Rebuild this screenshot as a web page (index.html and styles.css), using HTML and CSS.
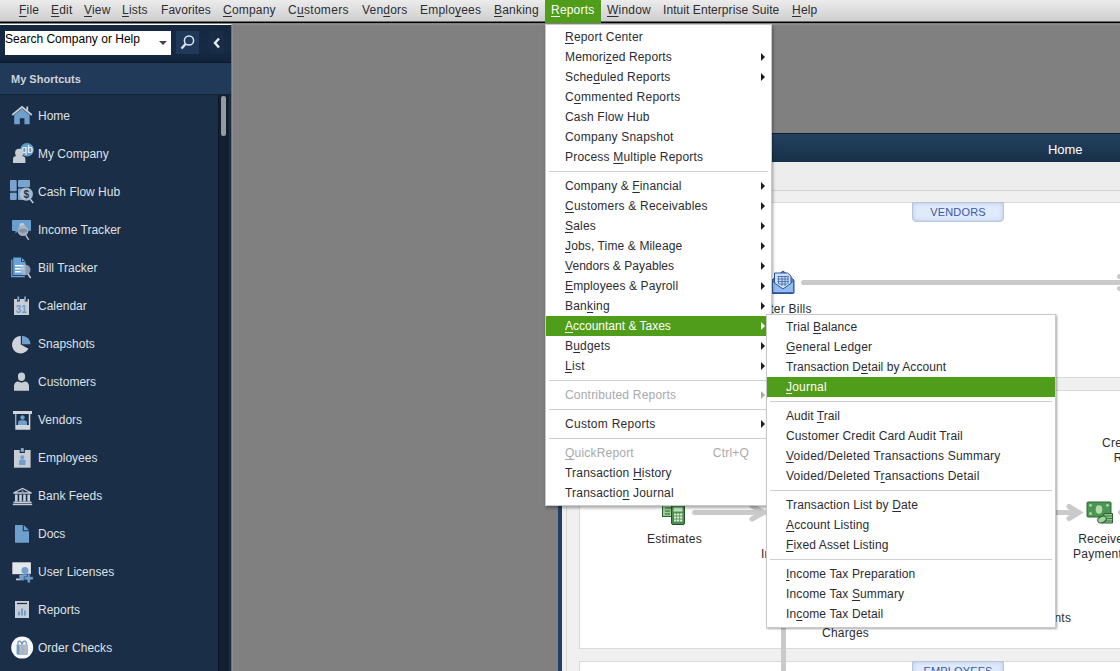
FILE: index.html
```html
<!DOCTYPE html>
<html lang="en">
<head>
<meta charset="utf-8">
<title>Reports menu</title>
<link rel="stylesheet" href="styles.css">
</head>
<body>
<div class="app">
  <nav class="menubar">
    <span class="mb mb-file"><u>F</u>ile</span>
    <span class="mb mb-edit"><u>E</u>dit</span>
    <span class="mb mb-view"><u>V</u>iew</span>
    <span class="mb mb-lists"><u>L</u>ists</span>
    <span class="mb mb-fav">Favorites</span>
    <span class="mb mb-company"><u>C</u>ompany</span>
    <span class="mb mb-cust">C<u>u</u>stomers</span>
    <span class="mb mb-vend">Ven<u>d</u>ors</span>
    <span class="mb mb-emp">Emplo<u>y</u>ees</span>
    <span class="mb mb-bank"><u>B</u>anking</span>
    <span class="mb mb-reports"><u>R</u>eports</span>
    <span class="mb mb-window"><u>W</u>indow</span>
    <span class="mb mb-suite">Intuit Enterprise Suite</span>
    <span class="mb"><u>H</u>elp</span>
  </nav>

  <div class="body">
    <aside class="sidebar">
      <div class="search">
        <div class="search-box"><span>Search Company or Help</span><i class="caret"></i></div>
        <div class="search-btn">
          <svg width="23" height="23" viewBox="0 0 23 23" fill="none" stroke="#dfe5ec"><circle cx="13" cy="9.5" r="4.6" stroke-width="1.5"/><path d="M9.6 13 5.5 17.5" stroke-width="2.4"/></svg>
        </div>
        <div class="collapse">
          <svg width="15" height="23" viewBox="0 0 15 23" fill="none" stroke="#e8ecf1" stroke-width="2.4"><path d="M10 7.5 6 12l4 4.5"/></svg>
        </div>
      </div>
      <div class="shortcuts-head">My Shortcuts</div>
      <div class="shortcuts">
        <ul class="links">
          <li><svg viewBox="0 0 24 24"><path d="M4.2 21.2V12L12 5.8l7.6 6.2v9.2h-5.2v-6h-4.6v6z" fill="#6fa0cd"/><path d="M2.2 12 12 4l9.8 8M17.3 3.5v4" fill="none" stroke="#c8ccd4" stroke-width="1.8"/></svg>Home</li>
          <li><svg viewBox="0 0 24 24"><circle cx="17" cy="8.7" r="6.8" fill="#5f9ccc"/><text x="11.6" y="12.3" class="qb">qb</text><circle cx="9.2" cy="11.9" r="4.1" fill="#c8ccd4"/><path d="M3 22v-3.6c0-2.4 1.4-3.4 3.5-3.4h5.4c2.1 0 3.5 1 3.5 3.4V22z" fill="#c8ccd4"/></svg>My Company</li>
          <li><svg viewBox="0 0 24 24"><g fill="#7ba3cf"><rect x="0" y="1" width="6.7" height="11.2" rx="1"/><rect x="8" y="1" width="12" height="7.2" rx="1"/><rect x="0" y="13.7" width="6.7" height="7.3" rx="1"/><rect x="8" y="9.5" width="7" height="11.5" rx="1"/></g><path d="m20 20 3.3 4" stroke="#c8ccd4" stroke-width="1.4"/><circle cx="16.3" cy="15.2" r="6.6" fill="#b9c4d2" opacity=".9"/><text x="13.5" y="19" class="usd">$</text></svg>Cash Flow Hub</li>
          <li><svg viewBox="0 0 24 24"><path d="M3 3h17q1 0 1 1v9q0 1-1 1H8l-2.5 2.500V14H3q-1 0-1-1V4q0-1 1-1z" fill="#67a0d0"/><circle cx="12" cy="8.600" r="2.500" fill="#c8ccd4"/><path d="m15.700 18.200 3 4.600" stroke="#b5bac2" stroke-width="1.500"/><circle cx="13" cy="13.700" r="5.400" fill="#a9b5c2" opacity=".95"/><path d="M8.300 13.200c2-2 7-2 9.500 0a5.400 5.400 0 0 1-9.500 0z" fill="#858f9b"/></svg>Income Tracker</li>
          <li><svg viewBox="0 0 24 24"><path d="M1.800 4.500v17.200h13" fill="none" stroke="#6fa0cd" stroke-width="1.300"/><path d="M3.200 2.500h8.300l4 4v13.700H3.200z" fill="#68a4d8"/><path d="M11.500 2.500v4h4" fill="none" stroke="#1b2e47" stroke-width=".8"/><g fill="#fff"><rect x="5" y="10" width="9.500" height="1.500"/><rect x="5" y="13" width="9.500" height="1.500"/><rect x="5" y="16" width="6" height="1.500"/></g><path d="m17.700 18.800 3 4.200" stroke="#c8ccd4" stroke-width="1.500"/><circle cx="15.200" cy="14.700" r="5.300" fill="#aebfd2" opacity=".75"/></svg>Bill Tracker</li>
          <li><svg viewBox="0 0 24 24"><path d="M4 6h3v2.400h2.800V6h5v2.400h2.800V6H19v16H4z" fill="#c8ccd4"/><path d="M7.400 3.500h1.800v4H7.400zM14.200 3.500h1.800v4h-1.800z" fill="#7fa6cd"/><text x="5.700" y="19.800" class="cal">31</text></svg>Calendar</li>
          <li><svg viewBox="0 0 24 24"><path d="M10.800 5v8.500l7.600 4.200A8.700 8.700 0 1 1 10.800 5z" fill="#d0d4da"/><path d="M12 4.700a8.600 8.600 0 0 1 8.500 8.500H12z" fill="#6fa0cd"/></svg>Snapshots</li>
          <li><svg viewBox="0 0 24 24"><ellipse cx="11.500" cy="7.700" rx="3.600" ry="4.200" fill="#c8ccd4"/><path d="M4 21.800v-4.600c0-3 1.800-4.700 4.300-4.700 2 1.200 4.400 1.200 6.400 0 2.500 0 4.300 1.700 4.300 4.700v4.600z" fill="#c8ccd4"/></svg>Customers</li>
          <li><svg viewBox="0 0 24 24"><path d="M3 4h19v3h-1.700v15.700h-15V7H3z" fill="#d3d7dd"/><path d="M6.300 7h12.500v11H6.300z" fill="#1b2e47"/><circle cx="12.500" cy="10.500" r="2.200" fill="#6fa0cd"/><path d="M8 18v-2c0-1.700 1-2.700 2.600-2.700h3.800c1.600 0 2.600 1 2.600 2.700v2z" fill="#6fa0cd"/></svg>Vendors</li>
          <li><svg viewBox="0 0 24 24"><path d="M4 5h16.600v17.700H4z" fill="#c8ccd4"/><path d="M9.700 4h5.200v4H9.700z" fill="#1b2e47"/><path d="M10.800 3.200h3v3.600h-3z" fill="#8bb2d8"/><circle cx="12.300" cy="12.200" r="2" fill="#6fa0cd"/><path d="M9 20v-3.500c0-1.200.8-1.900 2-1.900h2.600c1.200 0 2 .7 2 1.900V20z" fill="#6fa0cd"/></svg>Employees</li>
          <li><svg viewBox="0 0 24 24"><path d="m3.500 10 9-4.600 9 4.600z" fill="#1b2e47" stroke="#c8ccd4" stroke-width="1.300"/><circle cx="12.500" cy="8.300" r="1" fill="#6fa0cd"/><path d="M5 11.500h2.600v7H5zM9.200 11.500h2.600v7H9.200zM13.200 11.500h2.600v7h-2.600zM17.400 11.500H20v7h-2.600z" fill="#c8ccd4"/><path d="M3.500 18.500h18v1.500h-18z" fill="#c8ccd4"/><path d="M2.800 20.600h19.400v1.600H2.800z" fill="#c8ccd4"/></svg>Bank Feeds</li>
          <li><svg viewBox="0 0 24 24"><path d="M5 4h7.800v6.300H19v11.400H5z" fill="#6fa0cd"/><path d="M13.800 4 19 9.300h-5.200z" fill="#6fa0cd"/></svg>Docs</li>
          <li><svg viewBox="0 0 24 24"><path d="M2.300 3.300h18.600v11.900H2.300z" fill="#e3e5e8"/><path d="M9.500 16h4v3h-4zM6 19.500h8v1.800H6z" fill="#c8ccd4"/><circle cx="15" cy="11.500" r="3.500" fill="#6fa0cd"/><path d="M10 21v-2.500c0-2 1.300-3.200 3.200-3.200h4V21z" fill="#6fa0cd"/><path d="M17.200 15h3v2.800h3v3h-3v3h-3v-3h-3v-3h3z" fill="#6fa0cd" stroke="#1b2e47" stroke-width=".5"/></svg>User Licenses</li>
          <li><svg viewBox="0 0 24 24"><path d="M5 4h14v17H5z" fill="#c8ccd4"/><path d="M7 6.500h10" stroke="#1b2e47" stroke-width="1.200"/><path d="M8 14.500h2v4H8zM11 11.500h2v7h-2zM14 13.500h2v5h-2z" fill="#6fa0cd"/></svg>Reports</li>
          <li><svg viewBox="0 0 24 24"><circle cx="12.200" cy="12.600" r="11" fill="#f6f8fa"/><path d="M9 9.500h9V19l-1 1H8l-1-1z" fill="#b3b9c2"/><path d="M6.600 9.500h2.700V20l-2.700-1z" fill="#6f9ac4"/><path d="M11.500 10h2.500v9.500h-2.500z" fill="#a3b4c8"/><path d="M8 9.300c-1-4 3-4.500 4 0 .8-4.500 5-4 4.200 0" fill="none" stroke="#6f93bb" stroke-width="1.300"/></svg>Order Checks</li>
        </ul>
        <div class="track"><div class="thumb"></div></div>
      </div>
    </aside>

    <main class="desktop">
      <section class="window">
        <header class="win-head">Home</header>
        <div class="win-tabs"></div>
        <div class="win-body">
          <div class="panel panel-vendors"><span class="tag">VENDORS</span></div>
          <div class="panel panel-customers"></div>
          <div class="panel panel-employees"><span class="tag">EMPLOYEES</span></div>
        </div>
      </section>
    </main>
  </div>

  <div class="flow">
    <svg class="wires" width="1120" height="671" viewBox="0 0 1120 671" fill="none" stroke="#cacaca" stroke-width="5">
      <path d="M803.500 282.500H1120" stroke-linecap="round"/>
      <path d="M1119.500 276.500h2M1119.500 288.500h2" stroke-linecap="round"/>
      <path d="M694.500 512.500H765" stroke-linecap="round"/><path d="m752 506 12 6.500-12 6.500" stroke-linecap="round"/>
      <path d="M1040 512.500H1079"/><path d="m1069 506.500 10 6-10 6" stroke-linecap="round"/>
      <path d="M783.500 600V671"/><path d="M1120.500 512.500h4" stroke-linecap="round"/>
    </svg>
    <svg class="ic-bills" width="24" height="25" viewBox="0 0 24 25"><path d="M1 10 12 1l11 9v12.500q0 1-1 1H2q-1 0-1-1z" fill="#5f8cd6" stroke="#2e529a"/><path d="M1.500 11 12 18.500 22.500 11v11.500h-21z" fill="#93bbf3" stroke="#3a62ab" stroke-width=".9"/><path d="M3.500 3h13l3.500 3v7.300l-8 5.700-8.500-6z" fill="#cfe0fa" stroke="#2e529a"/><path d="M6.500 6.500h11M6.500 9h11M6.500 11.500h11M8 14h8M7.500 6v8M11 6v10M14 6v10M17 6v8" stroke="#4169b4" fill="none" stroke-width=".9"/></svg>
    <svg class="ic-est" width="26" height="28" viewBox="0 0 26 28"><rect x="1.500" y="2.500" width="20" height="15" fill="#9ccf95" stroke="#2c5f34"/><path d="M4 9h6M4 12h5M4 15h5M12 7h10" stroke="#2c5f34"/><rect x="10.500" y="6.500" width="13" height="19" rx="1.500" fill="#4c8f50" stroke="#23502b"/><rect x="12.500" y="8.500" width="9" height="4" fill="#c2e6bd"/><path d="M13 15.500h2.400M16 15.500h2.400M19 15.500h2.400M13 18.500h2.400M16 18.500h2.400M19 18.500h2.400M13 21.500h2.400M16 21.500h2.400M19 21.500h2.400" stroke="#d9f0d2" stroke-width="1.900"/></svg>
    <svg class="ic-pay" width="28" height="25" viewBox="0 0 28 25"><rect x="1" y="1" width="24" height="15" rx="1" fill="#4d9653" stroke="#2a6a35"/><ellipse cx="13" cy="8.500" rx="3.300" ry="4.200" fill="#b2dba8"/><g fill="#b2dba8"><circle cx="4.500" cy="4.300" r="1.400"/><circle cx="21.500" cy="4.300" r="1.400"/><circle cx="4.500" cy="12.700" r="1.400"/></g><path d="M18 12.500h8.500V22H16z" fill="#8fc688" stroke="#2c5f34"/><path d="M18 15h8M17 17.500h9M17 20h9" stroke="#3b7a42"/><ellipse cx="16" cy="18.500" rx="4.500" ry="3" transform="rotate(-25 16 18.500)" fill="#a6d49d" stroke="#2c5f34"/></svg>
    <span class="lbl l-bills">Enter Bills</span>
    <span class="lbl l-est">Estimates</span>
    <span class="lbl l-in">In</span>
    <span class="lbl l-rec">Receive<br>Payments</span>
    <span class="lbl l-cre">Create Sales<br>Receipts</span>
    <span class="lbl l-chg">Charges</span>
    <span class="lbl l-nts">Statements</span>
  </div>

  <div class="menu menu-reports">
    <div class="item"><span><u>R</u>eport Center</span></div>
    <div class="item sub snug"><span>Memori<u>z</u>ed Reports</span></div>
    <div class="item sub"><span>Sche<u>d</u>uled Reports</span></div>
    <div class="item wide"><span>C<u>o</u>mmented Reports</span></div>
    <div class="item"><span>Cash Flow Hub</span></div>
    <div class="item"><span>Company Snapshot</span></div>
    <div class="item"><span>Process <u>M</u>ultiple Reports</span></div>
    <hr>
    <div class="item sub snug"><span>Company &amp; <u>F</u>inancial</span></div>
    <div class="item sub"><span><u>C</u>ustomers &amp; Receivables</span></div>
    <div class="item sub"><span><u>S</u>ales</span></div>
    <div class="item sub snug"><span><u>J</u>obs, Time &amp; Mileage</span></div>
    <div class="item sub tight"><span><u>V</u>endors &amp; Payables</span></div>
    <div class="item sub snug"><span><u>E</u>mployees &amp; Payroll</span></div>
    <div class="item sub"><span>Ban<u>k</u>ing</span></div>
    <div class="item sub active flat"><span><u>A</u>ccountant &amp; Taxes</span></div>
    <div class="item sub"><span>B<u>u</u>dgets</span></div>
    <div class="item sub wide"><span><u>L</u>ist</span></div>
    <hr>
    <div class="item sub off"><span>Contributed Reports</span></div>
    <hr>
    <div class="item sub wide"><span>Custom Reports</span></div>
    <hr>
    <div class="item off"><span><u>Q</u>uickReport</span><kbd>Ctrl+Q</kbd></div>
    <div class="item"><span>Transaction <u>H</u>istory</span></div>
    <div class="item"><span>Transactio<u>n</u> Journal</span></div>
  </div>

  <div class="menu menu-tax">
    <div class="item snug"><span>Trial <u>B</u>alance</span></div>
    <div class="item"><span><u>G</u>eneral Ledger</span></div>
    <div class="item tight"><span>Transaction D<u>e</u>tail by Account</span></div>
    <div class="item active"><span><u>J</u>ournal</span></div>
    <hr>
    <div class="item tight"><span>Audit <u>T</u>rail</span></div>
    <div class="item snug"><span>Customer Credit Card Audit Trail</span></div>
    <div class="item"><span><u>V</u>oided/Deleted Transactions Summary</span></div>
    <div class="item"><span>Voided/Deleted T<u>r</u>ansactions Detail</span></div>
    <hr>
    <div class="item snug"><span>Transaction List by <u>D</u>ate</span></div>
    <div class="item snug"><span><u>A</u>ccount Listing</span></div>
    <div class="item snug"><span><u>F</u>ixed Asset Listing</span></div>
    <hr>
    <div class="item snug"><span><u>I</u>ncome Tax Preparation</span></div>
    <div class="item snug"><span>Income Tax <u>S</u>ummary</span></div>
    <div class="item snug"><span>In<u>c</u>ome Tax Detail</span></div>
  </div>
</div>
</body>
</html>
```
FILE: styles.css
```css
* { box-sizing: border-box; }
body {
  margin: 0;
  font: 12px/20px "Liberation Sans", Arial, sans-serif;
  letter-spacing: .2px;
  color: #2b2b33;
}
.app {
  position: relative;
  width: 1120px;
  height: 671px;
  overflow: hidden;
  display: flex;
  flex-direction: column;
  background: #808080;
}
u { text-decoration: underline; text-underline-offset: 2px; text-decoration-thickness: 1px; text-decoration-skip-ink: none; }

/* Menu bar */
.menubar {
  flex: none;
  height: 24px;
  display: flex;
  padding-left: 19px;
  background: linear-gradient(#ececec, #cfcfcf 21px, #000 22px, #000 23px, #808080 23px);
}
.mb { flex: none; height: 22px; width: 60px; white-space: nowrap; color: #2d2d33; }
.mb-file { width: 32px; }
.mb-edit { width: 33px; }
.mb-view { width: 38px; }
.mb-lists { width: 39px; }
.mb-fav { width: 62px; letter-spacing: .05px; }
.mb-company { width: 65px; }
.mb-cust { width: 74px; letter-spacing: .3px; }
.mb-vend { width: 58px; }
.mb-emp { width: 74px; }
.mb-bank { width: 51px; }
.mb-reports { width: 56px; height: 23px; padding-left: 6px; background: #4f9d1a; color: #fff; }
.mb-window { width: 62px; padding-left: 6px; }
.mb-suite { width: 129px; letter-spacing: .07px; }

.body { flex: 1; display: flex; min-height: 0; }

/* Sidebar */
.sidebar {
  flex: none;
  width: 232px;
  display: flex;
  flex-direction: column;
  border-top: 1px solid #fff;
  border-right: 1px solid #6a7079;
  background: #1b2e47;
  letter-spacing: .01px;
}
.search { flex: none; display: flex; height: 38px; padding: 6px 0 0 5px; background: linear-gradient(#14273f, #182b45 60%, #12223a); border-bottom: 1px solid #0f1c2e; }
.search-box { width: 166px; height: 24px; background: #fff; color: #000; line-height: 16px; display: flex; justify-content: space-between; }
.caret { width: 0; height: 0; margin: 10px 4px 0 0; border: 4px solid transparent; border-top-color: #444; border-bottom: 0; }
.search-btn { width: 23px; height: 23px; margin-left: 5px; background: #20395a; }
.collapse { width: 15px; height: 23px; margin-left: 10px; background: #192c47; }
.shortcuts-head { flex: none; height: 32px; padding: 1px 0 0 11px; background: #213a59; border-bottom: 1px solid #132236; color: #ced3da; font-weight: bold; font-size: 11px; line-height: 30px; }
.shortcuts { flex: 1; display: flex; min-height: 0; overflow: hidden; }
.links { flex: 1; margin: 0; padding: 2px 0 0; list-style: none; }
.links li { display: flex; align-items: center; height: 38px; padding-left: 10px; gap: 4px; color: #dde2e8; white-space: nowrap; }
.links svg { width: 24px; height: 24px; margin-bottom: 2px; overflow: visible; }
.qb { font: 10px "Liberation Sans", sans-serif; fill: #fff; letter-spacing: 0; }
.usd { font: bold 10px "Liberation Sans", sans-serif; fill: #24384f; }
.cal { font: bold 10px "Liberation Sans", sans-serif; fill: #6f9ac6; letter-spacing: 0; }
.track { width: 13px; background: #12202f; border-left: 1px solid #0d1826; border-right: 2px solid #1b2e47; padding: 1px 0 0 2px; }
.thumb { width: 5px; height: 40px; border-radius: 2px; background: #959aa0; }

/* Home window */
.desktop { flex: 1; min-width: 0; padding: 108px 0 0 325px; border-top: 1px solid #8d8d8d; border-left: 1px solid #8d8d8d; }
.window { height: 100%; width: 562px; border-left: 4px solid #213f63; box-shadow: -4px 0 #213f63; background: #f0f0f0; display: flex; flex-direction: column; box-shadow: none; }
.win-head { flex: none; height: 29px; margin-left: -4px; padding-left: 490px; line-height: 32px; color: #fff; background: linear-gradient(#23415f, #183049); border-top: 1px solid #101f33; font-size: 13px; letter-spacing: -.05px; }
.win-tabs { flex: none; height: 29px; background: #ededed; border-bottom: 1px solid #d4d4d4; }
.win-body { flex: 1; margin-left: 4px; padding: 11px 0 0 12px; border-left: 1px solid #dadada; display: flex; flex-direction: column; gap: 12px; }
.panel { flex: none; background: #fff; border: 1px solid #dadada; border-right: 0; text-align: center; }
.panel-vendors { height: 176px; }
.panel-customers { height: 259px; }
.panel-employees { height: 60px; }
.tag { display: block; width: 92px; height: 20px; margin: -1px 0 0 332px; border: 1px solid #b9c6da; border-radius: 0 0 4px 4px; background: #dfeafb; box-shadow: inset 0 0 4px #b4c6e2; color: #3b56a8; font-size: 11px; line-height: 19px; letter-spacing: .15px; }

/* Workflow canvas */
.flow, .wires { position: absolute; left: 0; top: 0; }
.ic-bills, .ic-est, .ic-pay, .lbl { position: absolute; }
.ic-bills { left: 771px; top: 270px; }
.ic-est { left: 661px; top: 499px; }
.ic-pay { left: 1086px; top: 501px; }
.lbl { white-space: nowrap; line-height: 15px; text-align: center; letter-spacing: .25px; }
.l-bills { left: 755px; top: 302px; }
.l-est { left: 647px; top: 532px; }
.l-in { left: 761px; top: 547px; }
.l-rec { left: 1073px; top: 532px; }
.l-cre { left: 1102px; top: 436px; }
.l-chg { left: 822px; top: 626px; letter-spacing: .25px; }
.l-nts { left: 1008px; top: 611px; }

/* Drop-down menus */
.menu { position: absolute; background: #fff; border: 1px solid #c9c9c9; padding: 2px 0; }
.menu-reports { left: 545px; top: 24px; width: 227px; height: 482px; box-shadow: 1px 2px 3px rgba(0, 0, 0, .35); }
.menu-tax { left: 766px; top: 314px; width: 290px; height: 314px; box-shadow: 1px 1px 2px rgba(0, 0, 0, .35); }
.item { display: flex; align-items: center; height: 20px; padding-left: 19px; white-space: nowrap; }
.item span { flex: 1; }
.wide { letter-spacing: .28px; }
.snug { letter-spacing: .13px; }
.tight { letter-spacing: .06px; }
.flat { letter-spacing: 0; }
.sub::after { content: ""; margin-right: 6px; border: 4px solid transparent; border-left: 4px solid #1c1c1c; border-right: 0; }
.active { background: #4f9d1a; color: #fff; }
.sub.active::after { border-left-color: #fff; }
.off { color: #a9a9ad; }
.sub.off::after { border-left-color: #a9a9ad; }
.menu kbd { font: inherit; margin-right: 22px; }
.menu hr { height: 1px; margin: 4px 3px; border: 0; background: #cfcfcf; }
```
